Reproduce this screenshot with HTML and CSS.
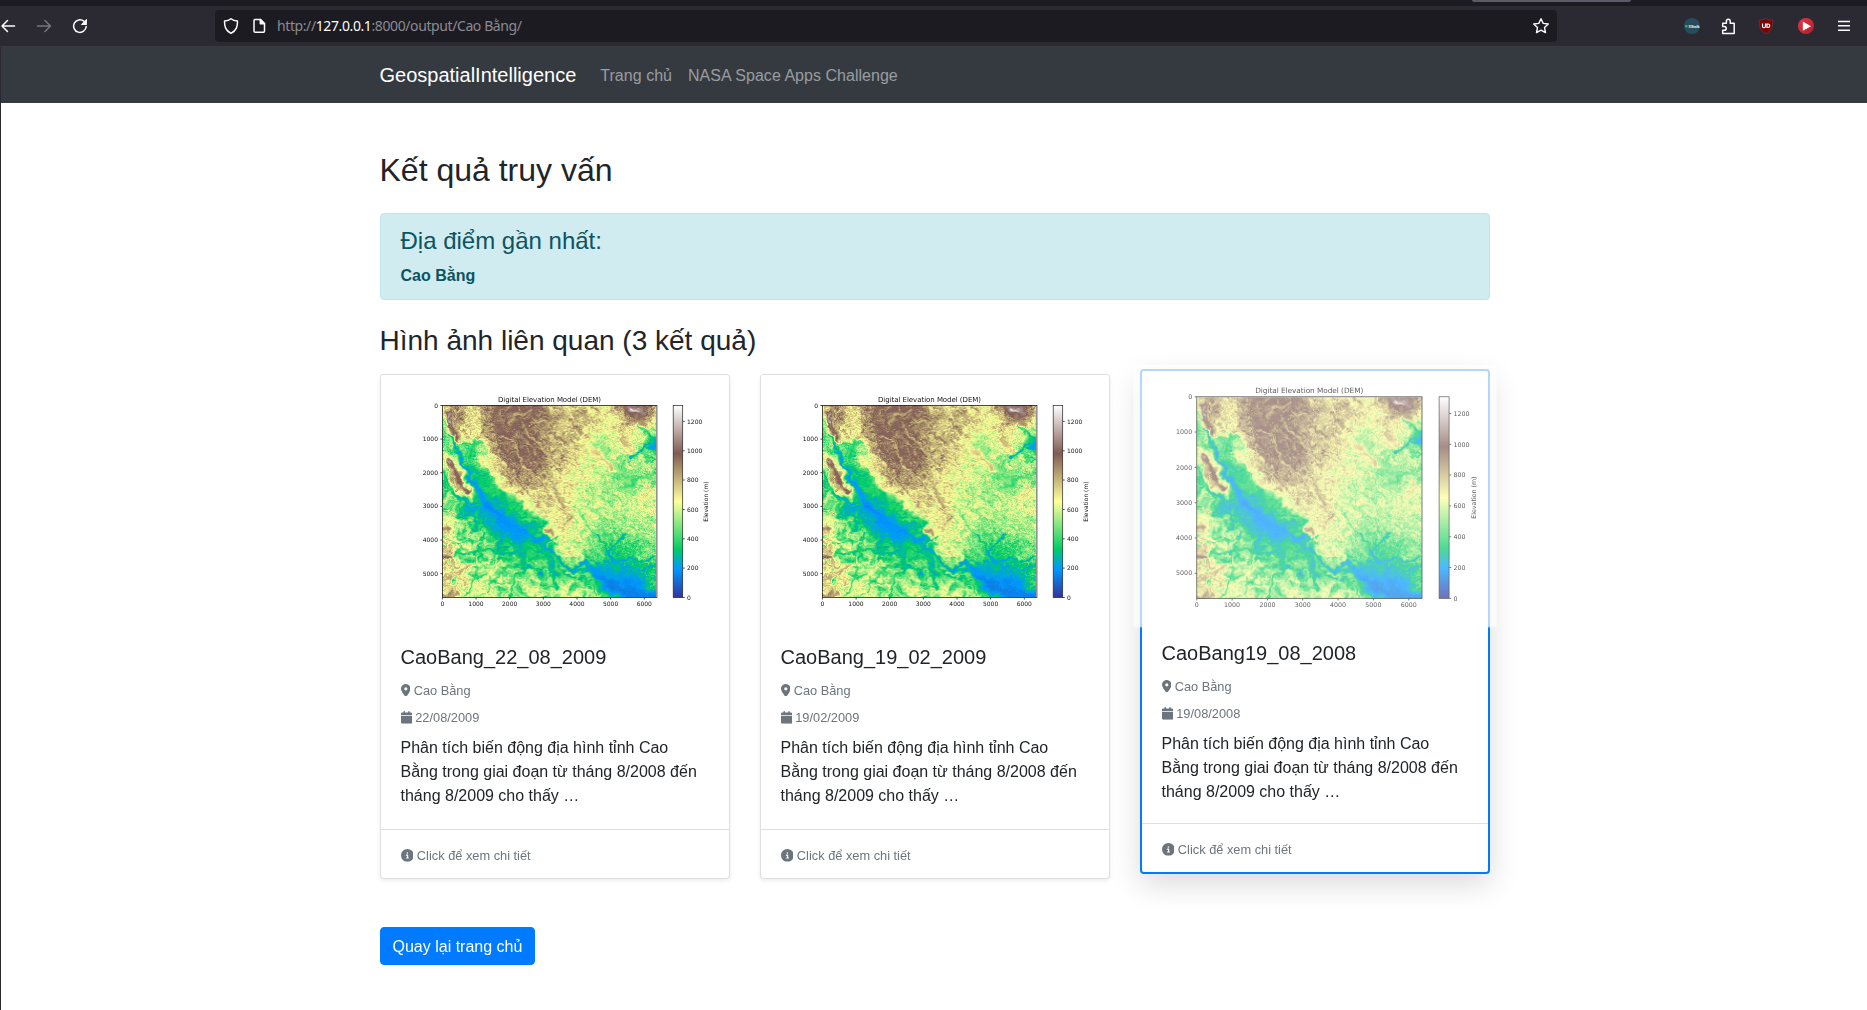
FILE: index.html
```html
<!DOCTYPE html>
<html lang="vi">
<head>
<meta charset="utf-8">
<title>Kết quả truy vấn</title>
<link rel="stylesheet" href="styles.css">
</head>
<body>
<svg class="defs" width="0" height="0" aria-hidden="true">
  <defs>
    <symbol id="i-pin" viewBox="0 0 384 512"><path d="M215.7 499.2C267 435 384 279.4 384 192C384 86 298 0 192 0S0 86 0 192c0 87.400 117 243 168.300 307.200c12.300 15.300 35.100 15.300 47.400 0zM192 128a64 64 0 1 1 0 128 64 64 0 1 1 0-128z"/></symbol>
    <symbol id="i-cal" viewBox="0 0 448 512"><path d="M96 32V64H48C21.500 64 0 85.500 0 112v48H448V112c0-26.500-21.500-48-48-48H352V32c0-17.700-14.300-32-32-32s-32 14.300-32 32V64H160V32c0-17.700-14.300-32-32-32S96 14.300 96 32zM448 192H0V464c0 26.500 21.500 48 48 48H400c26.500 0 48-21.500 48-48V192z"/></symbol>
    <symbol id="i-info" viewBox="0 0 512 512"><path d="M256 512A256 256 0 1 0 256 0a256 256 0 1 0 0 512zM216 336h24V272H216c-13.300 0-24-10.700-24-24s10.700-24 24-24h48c13.300 0 24 10.700 24 24v88h8c13.300 0 24 10.700 24 24s-10.700 24-24 24H216c-13.300 0-24-10.700-24-24s10.700-24 24-24zm40-208a32 32 0 1 1 0 64 32 32 0 1 1 0-64z"/></symbol>
    <linearGradient id="terrain" x1="0" y1="1" x2="0" y2="0">
      <stop offset="0" stop-color="#333399"/><stop offset=".15" stop-color="#0099ff"/><stop offset=".25" stop-color="#00cc66"/><stop offset=".5" stop-color="#ffff99"/><stop offset=".75" stop-color="#805c54"/><stop offset="1" stop-color="#fff"/>
    </linearGradient>
    <linearGradient id="play" x1="0" y1="0" x2="1" y2="1"><stop offset="0" stop-color="#f0304a"/><stop offset="1" stop-color="#a82424"/></linearGradient>
    <symbol id="axes" viewBox="0 0 348 250">
      <text class="axis-title" x="168.500" y="27" text-anchor="middle" textLength="103">Digital Elevation Model (DEM)</text>
      <g fill="none" stroke="#222" stroke-width=".8">
        <rect x="61.400" y="30.500" width="214.500" height="192"/>
        <path d="M59.400 30.500h2M59.400 64.100h2M59.400 97.700h2M59.400 131.400h2M59.400 165h2M59.400 198.600h2M61.400 222.500v2M95.100 222.500v2M128.700 222.500v2M162.300 222.500v2M196 222.500v2M229.600 222.500v2M263.300 222.500v2"/>
        <path d="M301.700 222.500h2M301.700 193.100h2M301.700 163.800h2M301.700 134.500h2M301.700 105h2M301.700 75.800h2M301.700 46.400h2"/>
      </g>
      <rect x="292.200" y="30.500" width="9.500" height="192" fill="url(#terrain)" stroke="#222" stroke-width=".7"/>
      <g class="tick" text-anchor="end">
        <text x="57" y="32.500">0</text><text x="57" y="66.200">1000</text><text x="57" y="99.800">2000</text><text x="57" y="133.400">3000</text><text x="57" y="167.100">4000</text><text x="57" y="200.700">5000</text>
      </g>
      <g class="tick" text-anchor="middle">
        <text x="61.400" y="231">0</text><text x="95" y="231">1000</text><text x="128.700" y="231">2000</text><text x="162.300" y="231">3000</text><text x="196" y="231">4000</text><text x="229.600" y="231">5000</text><text x="263.300" y="231">6000</text>
      </g>
      <g class="tick">
        <text x="306" y="224.700">0</text><text x="306" y="195.200">200</text><text x="306" y="165.900">400</text><text x="306" y="136.500">600</text><text x="306" y="107.200">800</text><text x="306" y="77.900">1000</text><text x="306" y="48.500">1200</text>
        <text transform="translate(327 126.500) rotate(-90)" text-anchor="middle">Elevation (m)</text>
      </g>
    </symbol>
  </defs>
</svg>

<header class="browser">
  <div class="tabstrip"><span class="tab"></span></div>
  <div class="toolbar">
    <svg class="nav-icons" width="95" height="40" fill="none" stroke="#fbfbfe" stroke-width="1.500" stroke-linecap="round" stroke-linejoin="round">
      <path d="M14.500 20H2M7.500 14.500L2 20l5.500 5.500"/>
      <path d="M37.500 20h13M45 14.500l5.500 5.500-5.500 5.500" stroke="#77767e"/>
      <path d="M86.200 20.500a6.300 6.300 0 1 1-2.300-5.300"/><path d="M86.500 13.800v4.700h-4.700z" fill="#fbfbfe" stroke-width="1"/>
    </svg>
    <div class="urlbar">
      <svg width="62" height="32" fill="none" stroke="#fbfbfe" stroke-width="1.500" stroke-linejoin="round">
        <path d="M16 8.700c1.900 1.600 4 2.100 6.500 2.300 0 5.500-.8 9.500-6.500 12.300-5.700-2.800-6.500-6.800-6.500-12.300 2.500-.2 4.600-.7 6.500-2.300z"/>
        <path d="M40 9.500h5.500l4 4V21a1.200 1.200 0 0 1-1.200 1.200h-8.100A1.200 1.200 0 0 1 39 21V10.700A1.200 1.200 0 0 1 40 9.500z"/><path d="M45.300 9.500v4.200h4.200z" fill="#fbfbfe"/>
      </svg>
      <div class="url">http://<b>127.0.0.1</b>:8000/output/Cao Bằng/</div>
      <svg class="star" width="18" height="18" viewBox="0 0 18 18" fill="none" stroke="#fbfbfe" stroke-width="1.400" stroke-linejoin="round"><path d="M9 1.700l2.200 4.700 5.100.6-3.800 3.500 1 5.100L9 13.100l-4.500 2.500 1-5.100L1.700 7l5.100-.6z"/></svg>
    </div>
    <div class="extensions">
      <svg width="16" height="16"><circle cx="8" cy="8" r="8" fill="#264d5c"/><circle cx="2.300" cy="8.200" r="1.300" fill="#32b66b"/><text x="4.500" y="9.600" class="badge-text">XStalk</text></svg>
      <svg class="puzzle" width="16" height="17" viewBox="0 0 16 17" fill="none" stroke="#fbfbfe" stroke-width="1.500" stroke-linejoin="round"><path d="M2.700 5.300h3.700V3.200a1.900 1.900 0 0 1 3.800 0v2.100h4V15.600H2.700v-3.300h1.600a1.900 1.900 0 0 0 0-3.800H2.700z"/></svg>
      <svg class="shield" width="16" height="16"><path d="M8 .3c2 1.500 4.300 1.700 6.700 1.800 0 6.300-.2 10.300-6.700 13.600C1.500 12.400 1.300 8.400 1.300 2.100 3.700 2 6 1.800 8 .3z" fill="#800000" stroke="#5d4448" stroke-width=".7"/><path d="M4.500 5.500v2.700a1.500 1.500 0 0 0 3 0V5.500M9 6v3.500h1a1.750 1.750 0 0 0 0-3.500z" fill="none" stroke="#fff" stroke-width="1.200"/></svg>
      <svg class="last" width="16" height="16"><circle cx="8" cy="8" r="8" fill="url(#play)"/><path d="M4.800 3.500v9.300L13 8.200z" fill="#fff"/></svg>
      <svg class="last" width="12" height="12" stroke="#fbfbfe" stroke-width="1.400"><path d="M0 1.500h12M0 5.800h12M0 10.200h12"/></svg>
    </div>
  </div>
</header>

<div class="page">
  <nav class="navbar"><div class="container nav-inner">
    <a class="brand">GeospatialIntelligence</a>
    <a class="nav-link">Trang chủ</a>
    <a class="nav-link">NASA Space Apps Challenge</a>
  </div></nav>

  <main class="container content">
    <h2>Kết quả truy vấn</h2>
    <div class="alert"><h4>Địa điểm gần nhất:</h4><p><strong>Cao Bằng</strong></p></div>
    <h3>Hình ảnh liên quan (3 kết quả)</h3>
    <div class="cards">
      <article class="card">
        <div class="dem"><div class="plot"><canvas width="215" height="192"></canvas><svg width="348" height="250"><use href="#axes"/></svg></div></div>
        <div class="card-body">
          <h5>CaoBang_22_08_2009</h5>
          <p class="meta"><svg class="w-pin"><use href="#i-pin"/></svg> Cao Bằng</p>
          <p class="meta"><svg class="w-cal"><use href="#i-cal"/></svg> 22/08/2009</p>
          <p class="desc">Phân tích biến động địa hình tỉnh Cao Bằng trong giai đoạn từ tháng 8/2008 đến tháng 8/2009 cho thấy …</p>
        </div>
        <div class="card-footer"><small><svg class="w-info"><use href="#i-info"/></svg> Click để xem chi tiết</small></div>
      </article>
      <article class="card">
        <div class="dem"><div class="plot"><canvas width="215" height="192"></canvas><svg width="348" height="250"><use href="#axes"/></svg></div></div>
        <div class="card-body">
          <h5>CaoBang_19_02_2009</h5>
          <p class="meta"><svg class="w-pin"><use href="#i-pin"/></svg> Cao Bằng</p>
          <p class="meta"><svg class="w-cal"><use href="#i-cal"/></svg> 19/02/2009</p>
          <p class="desc">Phân tích biến động địa hình tỉnh Cao Bằng trong giai đoạn từ tháng 8/2008 đến tháng 8/2009 cho thấy …</p>
        </div>
        <div class="card-footer"><small><svg class="w-info"><use href="#i-info"/></svg> Click để xem chi tiết</small></div>
      </article>
      <article class="card active">
        <div class="dem"><div class="plot"><canvas width="215" height="192"></canvas><svg width="348" height="250"><use href="#axes"/></svg></div></div>
        <div class="card-body">
          <h5>CaoBang19_08_2008</h5>
          <p class="meta"><svg class="w-pin"><use href="#i-pin"/></svg> Cao Bằng</p>
          <p class="meta"><svg class="w-cal"><use href="#i-cal"/></svg> 19/08/2008</p>
          <p class="desc">Phân tích biến động địa hình tỉnh Cao Bằng trong giai đoạn từ tháng 8/2008 đến tháng 8/2009 cho thấy …</p>
        </div>
        <div class="card-footer"><small><svg class="w-info"><use href="#i-info"/></svg> Click để xem chi tiết</small></div>
      </article>
    </div>
    <a class="btn">Quay lại trang chủ</a>
  </main>
</div>
<script src="dem.js"></script>
</body>
</html>
```
FILE: styles.css
```css
*{box-sizing:border-box}
html,body{height:100%}
body{margin:0;background:#fff;color:#212529;font:400 16px/1.5 "Liberation Sans",Arial,sans-serif;overflow:hidden}
h2,h3,h4,h5,p{margin:0;font-weight:400}
.defs{position:absolute}

.browser{height:47px;background:#2b2a33;border-bottom:1px solid #3b393e}
.tabstrip{height:6px;background:#1c1b22;display:flex;padding-left:1472px}
.tab{width:159px;height:2px;background:#5b5a68;border-radius:0 0 3px 3px}
.toolbar{height:40px;display:flex;align-items:center}
.nav-icons{flex:none}
.urlbar{margin-left:120px;width:1342px;height:32px;background:#1c1b22;border-radius:4px;display:flex;align-items:center;flex:none}
.url{font:14px/32px "Noto Sans",sans-serif;color:#8b8a91;flex:1;letter-spacing:-.4px;white-space:nowrap}
.url b{color:#fbfbfe;font-weight:400}
.star{margin-right:7px}
.extensions{flex:1;display:flex;align-items:center;padding-left:127px}
.extensions svg{flex:none}
.puzzle{margin-left:20px}
.shield{margin-left:22px}
.last{margin-left:24px}
.badge-text{font:bold 3.600px "Liberation Sans",sans-serif;fill:#fff}

.page{border-left:1px solid #2b2a33;height:963px}
.container{width:1140px;margin-left:363.500px;padding:0 15px}
.navbar{background:#343a40;height:56px}
.nav-inner{display:flex;align-items:center;height:56px}
.brand{font-size:20px;color:#fff;margin-right:16px}
.nav-link{padding:9px 8px 7px;color:rgba(255,255,255,.5);letter-spacing:.03px}

.content{padding-top:48px}
h2{font-size:32px;line-height:38.400px;margin-bottom:24px}
h3{font-size:28px;line-height:33.600px;margin:24px 0 16px}
h4{font-size:24px;line-height:28.800px;margin-bottom:8px}
h5{font-size:20px;line-height:24px;margin-bottom:12px}
.alert{padding:13px 20px 11px;border:1px solid #bee5eb;border-radius:4px;background:#d1ecf1;color:#0c5460}

.cards{display:grid;grid-template-columns:repeat(3,minmax(0,1fr));gap:30px;margin-bottom:48px}
.card{display:flex;flex-direction:column;background:#fff;border:1px solid rgba(0,0,0,.125);border-radius:4px;box-shadow:0 2px 4px rgba(0,0,0,.075)}
.card.active{border:2px solid #007bff;transform:translateY(-5px);box-shadow:0 10px 30px rgba(0,0,0,.15)}
.dem{height:250px;background:#fff;display:flex;justify-content:center;overflow:hidden;border-radius:3px 3px 0 0}
.active .dem{transform:scale(1.05);opacity:.7}
.plot{flex:none;width:348px;height:250px;display:grid}
.plot>*{grid-area:1/1}
.plot canvas{margin:30.500px 0 0 61.400px;width:214.500px;height:192px}
.axis-title{font:7px "DejaVu Sans",sans-serif;fill:#111}
.tick{font:6px "DejaVu Sans",sans-serif;fill:#111}
.card-body{flex:1;padding:20px}
.meta{font-size:12.800px;line-height:19.200px;color:#6c757d;margin-bottom:8px}
.meta svg,.card-footer svg{height:12.800px;fill:currentColor;vertical-align:-1.600px}
.w-pin{width:9.600px}
.w-cal{width:11.200px}
.w-info{width:12.800px}
.desc{margin:9px 0 -1px}
.card-footer{padding:13px 20px 11px;border-top:1px solid rgba(0,0,0,.125)}
.card-footer small{font-size:12.800px;color:#6c757d}
.btn{display:inline-block;padding:7px 12px 5px;border:1px solid #007bff;border-radius:4px;background:#007bff;color:#fff}
```
FILE: dem.js
```js
// Terrain model: coarse elevation grid (hundreds of metres), refined by
// valley / ridge lines and fractal noise, shaded with a terrain colormap.
const GRID = [
  [7,9,7.5,9,9.7,9.7,9.6,8.8,7.5,7.5,7.2,6.8,9.5,10.5,7.5],
  [5,9,6.8,9,9.7,9.6,9.6,8.6,7.6,8.2,7,6.6,8.2,9,6],
  [4,7,6.5,8.5,9.6,9.5,9.4,8.5,7.8,7.3,6.5,6.4,7.3,6,4],
  [5.5,4,4,6.8,9.2,9.5,9.3,8.5,7.8,7,5.3,6.2,6.5,5,3.2],
  [7,5,3.6,6,8.6,9.7,9.5,8.4,7.4,6.5,6.6,5.5,5,5.5,5],
  [4,8,2.5,3.4,7.8,8.6,8.5,7.8,7,6.4,5.9,5.2,4.6,4.8,5],
  [4,6,2.6,3,4.5,7.8,7.5,7.4,7,6.2,5.8,5.5,5.5,6.2,6.2],
  [3.5,3.3,3.3,2.2,2.8,3.3,7,7.1,7,6.1,5.8,5.7,5.8,6.1,6.1],
  [7,4.5,3.3,2.6,2,2.7,3.2,6.4,7.2,6.2,5.6,5.3,5.3,5.6,5.6],
  [6,5.3,4.6,3.8,2.4,2,2.6,4,6.8,6.2,5.2,4.5,4.5,5,5.5],
  [7,5.7,4.7,4.4,3.6,2.8,3,2.6,5.8,5.2,4.3,3.2,3.5,4.5,5],
  [6.5,6,5.4,5,4.5,3.8,4.4,3.6,3.5,3.2,2.5,2.6,2.7,3,3.6],
  [6.5,6,5.6,5,5,4.6,5,3.8,4.8,4,3.2,2.1,1.7,2.3,4],
  [8,6.4,5.6,5.2,5.3,4.6,5.2,4.8,5.5,5,4.6,3.5,1.6,1.3,1.6]
];
// [elevation, half-width, strength, x0,y0, x1,y1, ...] in a 644 x 576 frame
const LINES = [
  [980,9,1, 18,22, 24,60, 40,100],
  [1150,5,.9, 16,30, 20,55],
  [960,10,1, 22,172, 40,200, 60,232, 82,262],
  [1100,5,.9, 20,165, 26,178],
  [640,5,.9, 45,165, 65,215, 88,250],
  [310,14,.85, 90,185, 130,225, 180,272, 240,310, 300,350],
  [330,8,.8, 88,105, 90,150],
  [350,6,.7, 60,118, 110,112],
  [690,7,.85, 122,165, 165,222, 200,258],
  [690,6,.85, 225,278, 262,308],
  [830,8,1, 312,370, 328,388],
  [620,5,.8, 350,375, 358,430],
  [210,4,.9, 22,85, 45,140, 62,165],
  [195,7,1, 55,160, 85,215, 120,270, 165,322],
  [170,13,1, 135,300, 170,330, 205,360, 250,380],
  [195,22,.75, 195,345, 225,375],
  [185,7,1, 250,380, 285,410],
  [200,5,.95, 285,408, 330,440, 365,478, 388,498, 400,478, 425,470, 450,485, 480,505],
  [160,12,1, 460,500, 500,535, 540,558, 590,580],
  [150,15,.9, 520,545, 570,570, 644,576],
  [210,9,.8, 400,490, 470,500, 540,520],
  [210,4,.9, 470,392, 500,432, 530,412, 545,385],
  [210,5,.9, 500,432, 520,470, 565,462, 640,458],
  [200,3,.9, 545,480, 541,545],
  [205,3,.8, 545,490, 600,492, 644,480],
  [230,6,.85, 38,268, 75,300, 120,318, 160,330],
  [240,4,.8, 0,200, 40,270, 98,335, 96,365],
  [300,4,.85, 0,225, 30,260, 60,320],
  [290,4,.85, 22,470, 60,440, 110,438, 150,430, 195,452, 240,435, 258,405],
  [240,3,.8, 150,432, 162,445, 200,452, 232,436, 250,400],
  [280,4,.85, 242,430, 240,490, 215,530, 205,576],
  [260,4,.9, 300,420, 322,460, 332,500, 340,545],
  [300,4,.85, 340,450, 360,500, 385,520],
  [330,3,.8, 100,450, 100,520, 70,576],
  [330,3,.8, 240,470, 180,500, 130,560],
  [310,3,.8, 255,440, 285,490, 300,540],
  [330,3,.8, 0,420, 60,415, 150,400],
  [900,5,.8, 0,362, 20,370], [900,5,.8, 20,315, 45,325],
  [980,6,.9, 0,455, 30,462], [1200,3,.9, 2,462, 8,462],
  [850,5,.75, 20,505, 55,492, 80,480],
  [820,4,.7, 0,530, 30,510, 60,505],
  [850,5,.8, 0,574, 45,570],
  [1050,14,.9, 560,8, 598,22], [930,10,.8, 590,35, 605,55],
  [1250,4,.8, 566,10, 590,18],
  [220,5,.95, 644,120, 615,122, 590,140, 568,155],
  [200,8,.9, 636,105, 644,125],
  [330,5,.85, 590,60, 615,85, 636,110],
  [380,4,.8, 644,205, 600,220, 560,240],
  [450,15,.7, 520,185, 555,210, 560,250],
  [480,15,.6, 465,105, 500,150],
  [820,8,.75, 455,135, 485,165, 508,190],
  [880,9,.8, 428,18, 436,32], [800,8,.7, 548,105, 565,128],
  [860,6,.6, 338,235, 350,275, 370,300],
  [760,4,.7, 205,48, 230,28, 265,18],
  [700,2.5,.7, 185,90, 220,125, 240,180, 295,225],
  [720,2.5,.6, 240,70, 290,110, 340,180],
  [720,2.5,.6, 270,30, 340,80, 410,130],
  [700,2.5,.6, 170,140, 190,200, 245,255],
  [340,3,.5, 400,300, 440,370, 490,420],
  [380,3,.5, 430,290, 480,340, 500,400],
  [400,3,.5, 385,330, 430,400, 480,450]
];
const W = 215, H = 192;
const fract = v => v - Math.floor(v);
const hash = (x, y) => fract(Math.sin(x * 127.1 + y * 311.7) * 43758.5453);
function noise(x, y) {
  const i = Math.floor(x), j = Math.floor(y);
  let u = x - i, v = y - j;
  u = u * u * (3 - 2 * u); v = v * v * (3 - 2 * v);
  return (hash(i, j) * (1 - u) + hash(i + 1, j) * u) * (1 - v) + (hash(i, j + 1) * (1 - u) + hash(i + 1, j + 1) * u) * v;
}
const ridge = (x, y) => 1 - Math.abs(noise(x, y) * 2 - 1);
function base(x, y) {
  const gx = Math.min(13.999, Math.max(0, x / 46)), gy = Math.min(12.999, Math.max(0, y / 44.3));
  const i = Math.floor(gx), j = Math.floor(gy);
  const u = gx - i, v = gy - j;
  return 100 * ((GRID[j][i] * (1 - u) + GRID[j][i + 1] * u) * (1 - v) + (GRID[j + 1][i] * (1 - u) + GRID[j + 1][i + 1] * u) * v);
}
function distance(x, y, l) {
  let best = 1e9;
  for (let k = 3; k + 3 < l.length; k += 2) {
    const ax = l[k], ay = l[k + 1], dx = l[k + 2] - ax, dy = l[k + 3] - ay;
    const t = Math.max(0, Math.min(1, ((x - ax) * dx + (y - ay) * dy) / (dx * dx + dy * dy)));
    best = Math.min(best, Math.hypot(x - ax - t * dx, y - ay - t * dy));
  }
  return best;
}
const STOPS = [[0,51,51,153],[.15,0,153,255],[.25,0,204,102],[.5,255,255,153],[.75,128,92,84],[1,255,255,255]];
function color(e) {
  const t = Math.max(0, Math.min(.9999, e / 1310));
  let k = 0;
  while (t > STOPS[k + 1][0]) k++;
  const a = STOPS[k], b = STOPS[k + 1], f = (t - a[0]) / (b[0] - a[0]);
  return [1, 2, 3].map(c => a[c] + (b[c] - a[c]) * f);
}
function elevation(px, py) {
  const x = px * 3, y = py * 3;
  const wx = x + (noise(x / 22, y / 22) - .5) * 24 + (noise(x / 8, y / 8 + 50) - .5) * 12;
  const wy = y + (noise(x / 22 + 90, y / 22) - .5) * 24 + (noise(x / 8 + 20, y / 8) - .5) * 12;
  let e = base(wx, wy);
  const north = y < x * .75 + 130;
  // Diagonal grain north of the valley, branching spurs to the south
  const a = (wx + wy) * .707, b = (wx - wy) * .707;
  const grain = north ? ridge(a / 34, b / 11) * .5 + ridge(a / 14 + 7, b / 6) * .5
                      : ridge(wx / 30, wy / 22) * .6 + ridge(wx / 12 + 5, wy / 10) * .4;
  const amp = Math.max(0, Math.min(1, (e - 170) / 250));
  e += amp * ((grain - .6) * (north ? -260 : 480) + (hash(px, py) - .5) * (north ? 120 : 60));
  if (e > 930 && north) e = 930 + (e - 930) * .35;
  for (const l of LINES) {
    const d = distance(x * .3 + wx * .7, y * .3 + wy * .7, l) / l[1];
    if (d < 2.5) { const k = l[2] * Math.exp(-d * d * .9); e += (l[0] - e) * k; }
  }
  // Small hills inside the green lowland, streams left flat
  const low = Math.max(0, Math.min(1, (e - 215) / 80));
  e += low * (ridge(wx / 13 + 3, wy / 11) - .5) * 110;
  return e + (hash(px + 31, py) - .5) * 30;
}
const image = new ImageData(W, H);
for (let y = 0; y < H; y++) for (let x = 0; x < W; x++) {
  const c = color(elevation(x, y)), o = (y * W + x) * 4;
  image.data[o] = c[0]; image.data[o + 1] = c[1]; image.data[o + 2] = c[2]; image.data[o + 3] = 255;
}
document.querySelectorAll('canvas').forEach(c => c.getContext('2d').putImageData(image, 0, 0));
```
